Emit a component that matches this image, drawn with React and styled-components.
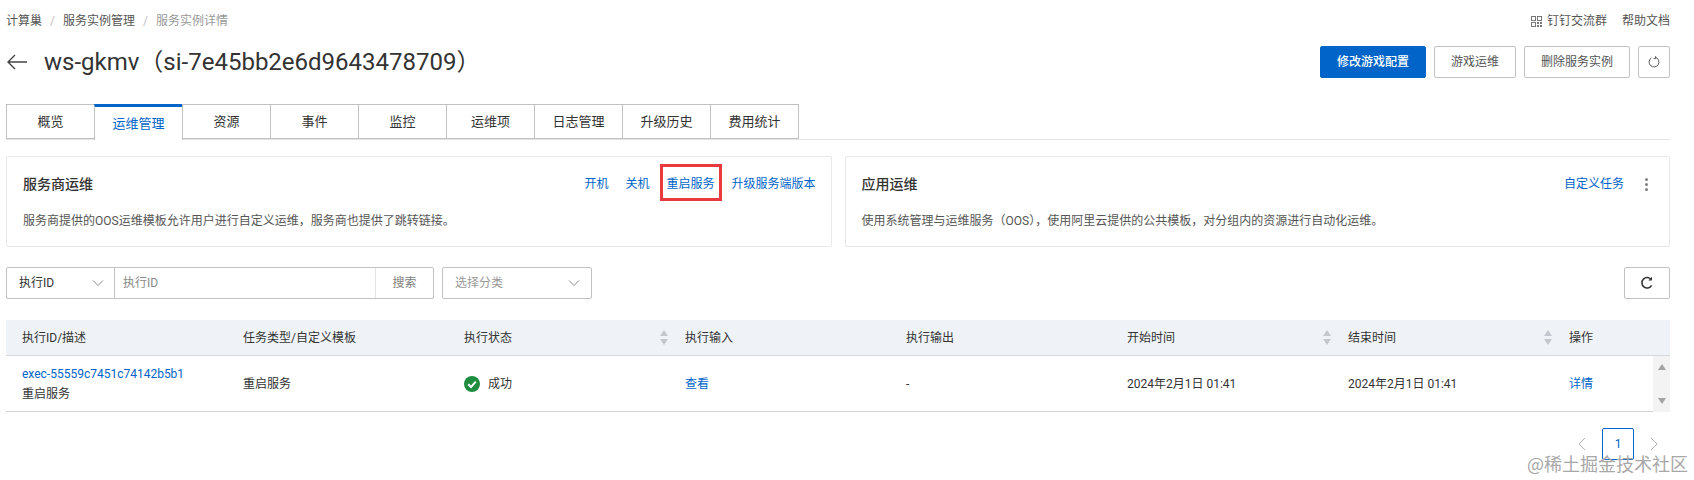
import React from 'react';
import styled, { createGlobalStyle } from 'styled-components';

const GlobalStyle = createGlobalStyle`
  html, body {
    margin: 0;
    padding: 0;
    background: #fff;
  }
  body {
    color: #333;
    font-family: Roboto, "Noto Sans CJK SC", sans-serif;
    font-size: 12px;
    line-height: 20px;
  }
  * {
    box-sizing: border-box;
  }
`;

const blue = '#0064c8';
const line = '#c1c1c1';

const Page = styled.div`
  position: relative;
  width: 1694px;
  height: 480px;
  padding: 0 24px 0 6px;
  overflow: hidden;
`;

const TopBar = styled.div`
  display: flex;
  align-items: center;
  justify-content: space-between;
  height: 42px;
  margin-bottom: 4px;
`;

const Crumbs = styled.div`
  display: flex;
  align-items: center;
`;

const Crumb = styled.span`
  color: ${props => (props.current ? '#999' : '#555')};
`;

const CrumbSep = styled.span`
  margin: 0 8px;
  color: #c1c1c1;
`;

const HelpLinks = styled.div`
  display: flex;
  align-items: center;
  color: #555;
`;

const HelpLink = styled.span`
  display: flex;
  align-items: center;
  gap: 5px;
  margin-left: 15px;
`;

const HeaderRow = styled.div`
  display: flex;
  align-items: center;
  justify-content: space-between;
  height: 32px;
`;

const TitleWrap = styled.div`
  display: flex;
  align-items: center;
  gap: 17px;
  margin-left: 1px;
`;

const Title = styled.h1`
  margin: 0;
  color: #333;
  font-size: 24px;
  font-weight: 400;
  line-height: 32px;
`;

const Actions = styled.div`
  display: flex;
  gap: 8px;
`;

const Button = styled.button`
  display: flex;
  align-items: center;
  justify-content: center;
  width: ${props => props.w}px;
  height: ${props => props.h || 32}px;
  padding: 0;
  border: 1px solid ${props => (props.primary ? blue : line)};
  border-radius: 2px;
  background: ${props => (props.primary ? blue : '#fff')};
  color: ${props => (props.primary ? '#fff' : '#555')};
  font: inherit;
  font-weight: ${props => (props.primary ? 500 : 400)};
`;

const Tabs = styled.div`
  display: flex;
  height: 36px;
  margin-top: 26px;
  border-bottom: 1px solid #e3e3e3;
`;

const Tab = styled.div`
  display: flex;
  align-items: center;
  justify-content: center;
  width: 89px;
  height: ${props => (props.active ? '36px' : '35px')};
  margin-left: -1px;
  padding-top: ${props => (props.active ? '0' : '1px')};
  border: 1px solid ${line};
  border-top: ${props => (props.active ? `3px solid ${blue}` : `1px solid ${line}`)};
  border-bottom: ${props => (props.active ? '0' : `1px solid ${line}`)};
  background: #fff;
  color: ${props => (props.active ? blue : '#333')};
  font-size: 13px;
  &:first-child {
    margin-left: 0;
  }
`;

const Cards = styled.div`
  display: grid;
  grid-template-columns: 1fr 1fr;
  gap: 13px;
  margin-top: 16px;
`;

const Card = styled.div`
  height: 91px;
  padding: 17px 15px 0 16px;
  border: 1px solid #e8e8e8;
  border-radius: 2px;
`;

const CardHead = styled.div`
  display: flex;
  align-items: center;
  justify-content: space-between;
  height: 20px;
`;

const CardTitle = styled.div`
  color: #333;
  font-size: 14px;
  font-weight: 500;
`;

const CardLinks = styled.div`
  display: flex;
  align-items: center;
`;

const CardLink = styled.span`
  position: relative;
  margin-left: 17px;
  color: ${blue};
  &:first-child {
    margin-left: 0;
  }
`;

const Highlight = styled.span`
  position: absolute;
  top: -10px;
  left: -6px;
  width: 62px;
  height: 37px;
  border: 3px solid #e83a3f;
`;

const Dots = styled.span`
  display: flex;
  flex-direction: column;
  gap: 2px;
  margin: 0 6px 0 21px;
  & i {
    width: 3px;
    height: 3px;
    border-radius: 50%;
    background: #808080;
  }
`;

const CardDesc = styled.div`
  margin-top: 17px;
  color: #555;
`;

const Toolbar = styled.div`
  display: flex;
  align-items: stretch;
  justify-content: space-between;
  height: 32px;
  margin-top: 20px;
`;

const Filters = styled.div`
  display: flex;
  gap: 8px;
`;

const SearchGroup = styled.div`
  display: flex;
  width: 428px;
  border: 1px solid ${line};
  border-radius: 2px;
`;

const Field = styled.div`
  display: flex;
  align-items: center;
  justify-content: space-between;
  width: ${props => props.w}px;
  padding: 0 ${props => props.pr || 0}px 0 ${props => props.pl}px;
  border-right: ${props => (props.divided ? `1px solid ${props.divided}` : '0')};
  color: ${props => (props.muted ? '#888' : '#333')};
`;

const SearchButton = styled.div`
  display: flex;
  flex: 1;
  align-items: center;
  justify-content: center;
  color: #808080;
`;

const CategorySelect = styled.div`
  display: flex;
  align-items: center;
  justify-content: space-between;
  width: 150px;
  padding: 0 11px 0 12px;
  border: 1px solid ${line};
  border-radius: 2px;
  color: #999;
`;

const Table = styled.div`
  margin-top: 21px;
`;

const HeadRow = styled.div`
  display: grid;
  grid-template-columns: repeat(7, 221px) 1fr;
  height: 36px;
  border-bottom: 1px solid #d5d8de;
  background: #eff3f8;
`;

const BodyRow = styled.div`
  position: relative;
  display: grid;
  grid-template-columns: repeat(7, 221px) 1fr;
  height: 56px;
  border-bottom: 1px solid #d3d3d3;
`;

const Cell = styled.div`
  display: flex;
  flex-direction: ${props => (props.stack ? 'column' : 'row')};
  align-items: ${props => (props.stack ? 'flex-start' : 'center')};
  justify-content: ${props => (props.stack ? 'center' : 'space-between')};
  padding: 0 1px 0 16px;
  color: #333;
`;

const ExecId = styled.span`
  color: ${blue};
`;

const LinkText = styled.span`
  color: ${blue};
  font-size: 12px;
`;

const Status = styled.span`
  display: flex;
  align-items: center;
  gap: 8px;
`;

const Scrollbar = styled.div`
  position: absolute;
  top: 0;
  right: 0;
  bottom: -1px;
  display: flex;
  flex-direction: column;
  align-items: center;
  justify-content: space-between;
  width: 17px;
  padding: 8px 0;
  background: #f3f3f3;
`;

const Pager = styled.div`
  display: flex;
  align-items: center;
  justify-content: flex-end;
  gap: 16px;
  margin-top: 16px;
  margin-right: 12px;
`;

const PageNumber = styled.div`
  display: flex;
  align-items: center;
  justify-content: center;
  width: 32px;
  height: 32px;
  border: 1px solid ${blue};
  border-radius: 2px;
  color: ${blue};
`;

const Watermark = styled.div`
  position: absolute;
  top: 451px;
  right: 6px;
  color: #a8a8a8;
  font-family: "Noto Sans CJK SC", sans-serif;
  font-size: 18px;
  line-height: 24px;
  white-space: nowrap;
`;

const Chevron = ({ color = '#888' }) => (
  <svg width="12" height="12" viewBox="0 0 12 12" fill="none">
    <path d="M1 3.5 6 8.5 11 3.5" stroke={color} strokeWidth="1" />
  </svg>
);

const PagerArrow = ({ next }) => (
  <svg width="8" height="16" viewBox="0 0 8 16" fill="none">
    <path d={next ? 'M1 2 7 8 1 14' : 'M7 2 1 8 7 14'} stroke="#b0b0b0" strokeWidth="1" />
  </svg>
);

const BackArrow = () => (
  <svg width="20" height="16" viewBox="0 0 20 16" fill="none">
    <path d="M20 8H1M8 1 1 8 8 15" stroke="#444" strokeWidth="1.4" />
  </svg>
);

const SmallRefresh = () => (
  <svg width="12" height="12" viewBox="0 0 12 12" fill="none">
    <path d="M7.6 1.4A4.9 4.9 0 1 1 3.4 1.9" stroke="#555" strokeWidth="1" />
    <path d="M7.6 .2V2.6H5.6" stroke="#555" strokeWidth="1" />
  </svg>
);

const BigRefresh = () => (
  <svg width="14" height="14" viewBox="0 0 14 14" fill="none">
    <path d="M11.6 9.4A5.2 5.2 0 1 1 11.2 3.6" stroke="#333" strokeWidth="1.5" />
    <path d="M12 .8V4.4H8.4" fill="#333" />
  </svg>
);

const QrIcon = () => (
  <svg width="11" height="11" viewBox="0 0 11 11" fill="#777">
    <path d="M0 0H5V5H0ZM1 1V4H4V1ZM6 0H11V5H6ZM7 1V4H10V1ZM0 6H5V11H0ZM1 7V10H4V7ZM6 6H8V8H6ZM9 6H11V8H9ZM6 9H8V11H6ZM9 9H11V11H9Z" />
  </svg>
);

const SortIcon = () => (
  <svg width="8" height="15" viewBox="0 0 8 15" fill="#c4c8ce">
    <path d="M4 0 8 6H0Z" />
    <path d="M4 15 0 9H8Z" />
  </svg>
);

const SuccessIcon = () => (
  <svg width="16" height="16" viewBox="0 0 16 16">
    <circle cx="8" cy="8" r="8" fill="#1e8e3e" />
    <path d="M4.2 8.2 7 11 11.8 5.6" fill="none" stroke="#fff" strokeWidth="2" />
  </svg>
);

const ScrollArrow = ({ down }) => (
  <svg width="8" height="6" viewBox="0 0 8 6" fill="#a3a3a3">
    <path d={down ? 'M0 0H8L4 6Z' : 'M4 0 8 6H0Z'} />
  </svg>
);

const tabs = ['概览', '运维管理', '资源', '事件', '监控', '运维项', '日志管理', '升级历史', '费用统计'];

const columns = [
  { label: '执行ID/描述' },
  { label: '任务类型/自定义模板' },
  { label: '执行状态', sort: true },
  { label: '执行输入' },
  { label: '执行输出' },
  { label: '开始时间', sort: true },
  { label: '结束时间', sort: true },
  { label: '操作' },
];

const App = () => (
  <Page>
    <GlobalStyle />
    <TopBar>
      <Crumbs>
        <Crumb>计算巢</Crumb>
        <CrumbSep>/</CrumbSep>
        <Crumb>服务实例管理</Crumb>
        <CrumbSep>/</CrumbSep>
        <Crumb current>服务实例详情</Crumb>
      </Crumbs>
      <HelpLinks>
        <HelpLink><QrIcon />钉钉交流群</HelpLink>
        <HelpLink>帮助文档</HelpLink>
      </HelpLinks>
    </TopBar>

    <HeaderRow>
      <TitleWrap>
        <BackArrow />
        <Title>ws-gkmv（si-7e45bb2e6d9643478709）</Title>
      </TitleWrap>
      <Actions>
        <Button primary w={106}>修改游戏配置</Button>
        <Button w={82}>游戏运维</Button>
        <Button w={106}>删除服务实例</Button>
        <Button w={32}><SmallRefresh /></Button>
      </Actions>
    </HeaderRow>

    <Tabs>
      {tabs.map((tab, i) => <Tab key={tab} active={i === 1}>{tab}</Tab>)}
    </Tabs>

    <Cards>
      <Card>
        <CardHead>
          <CardTitle>服务商运维</CardTitle>
          <CardLinks>
            <CardLink>开机</CardLink>
            <CardLink>关机</CardLink>
            <CardLink>重启服务<Highlight /></CardLink>
            <CardLink>升级服务端版本</CardLink>
          </CardLinks>
        </CardHead>
        <CardDesc>服务商提供的OOS运维模板允许用户进行自定义运维，服务商也提供了跳转链接。</CardDesc>
      </Card>
      <Card>
        <CardHead>
          <CardTitle>应用运维</CardTitle>
          <CardLinks>
            <CardLink>自定义任务</CardLink>
            <Dots><i /><i /><i /></Dots>
          </CardLinks>
        </CardHead>
        <CardDesc>使用系统管理与运维服务（OOS），使用阿里云提供的公共模板，对分组内的资源进行自动化运维。</CardDesc>
      </Card>
    </Cards>

    <Toolbar>
      <Filters>
        <SearchGroup>
          <Field w={108} pl={12} pr={10} divided={line}>执行ID<Chevron /></Field>
          <Field w={261} pl={8} muted divided="#e3e3e3">执行ID</Field>
          <SearchButton>搜索</SearchButton>
        </SearchGroup>
        <CategorySelect>选择分类<Chevron /></CategorySelect>
      </Filters>
      <Button w={46}><BigRefresh /></Button>
    </Toolbar>

    <Table>
      <HeadRow>
        {columns.map(col => (
          <Cell key={col.label}>
            <span>{col.label}</span>
            {col.sort && <SortIcon />}
          </Cell>
        ))}
      </HeadRow>
      <BodyRow>
        <Cell stack>
          <ExecId>exec-55559c7451c74142b5b1</ExecId>
          <span>重启服务</span>
        </Cell>
        <Cell>重启服务</Cell>
        <Cell><Status><SuccessIcon />成功</Status></Cell>
        <Cell><LinkText>查看</LinkText></Cell>
        <Cell>-</Cell>
        <Cell>2024年2月1日 01:41</Cell>
        <Cell>2024年2月1日 01:41</Cell>
        <Cell><LinkText>详情</LinkText></Cell>
        <Scrollbar>
          <ScrollArrow />
          <ScrollArrow down />
        </Scrollbar>
      </BodyRow>
    </Table>

    <Pager>
      <PagerArrow />
      <PageNumber>1</PageNumber>
      <PagerArrow next />
    </Pager>

    <Watermark>@稀土掘金技术社区</Watermark>
  </Page>
);

export default App;
